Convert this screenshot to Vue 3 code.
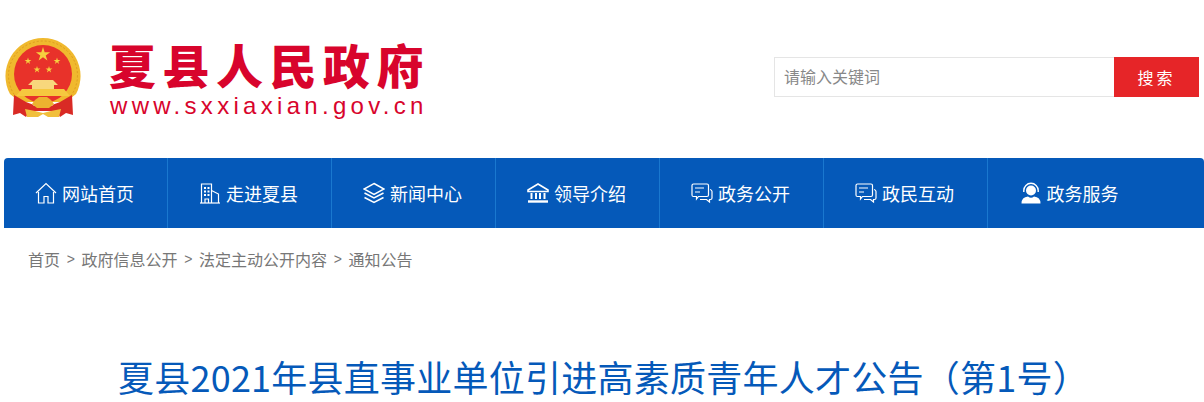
<template>
  <div class="page">
    <!-- Header -->
    <header class="site-header">
      <div class="logo">
        <svg class="emblem" width="84" height="90" viewBox="0 0 84 90">
          <!-- gold ring and red field -->
          <path d="M43 8 A38 38 0 0 1 76 64 L66 72 H20 L10 64 A38 38 0 0 1 43 8 Z" fill="#f0b92e" />
          <circle cx="43" cy="45.500" r="34.500" fill="none" stroke="#dd9c20" stroke-width="1" stroke-dasharray="2 2" />
          <circle cx="43" cy="44" r="29" fill="#e8322a" />
          <polygon v-for="(s, i) in stars" :key="i" :points="s" fill="#f6d03f" />
          <!-- gate -->
          <path d="M33 50 H53 L58 55 H54 V59 H32 V55 H28 Z" fill="#f8d77c" />
          <path d="M22 59 H64 L70 66 H16 Z" fill="#f6c83f" />
          <!-- ribbons -->
          <path d="M14 65 L26 72 L34 75 L30 80 L26 87 L20 83 L13 85 Z" fill="#d92a25" />
          <path d="M72 65 L60 72 L52 75 L56 80 L60 87 L66 83 L73 85 Z" fill="#d92a25" />
          <path d="M30 76 H56 L58 81 H28 Z" fill="#d92a25" />
          <!-- wheel and base -->
          <path d="M35 70 L39 67 H47 L51 70 L54 74 L49 78 H37 L32 74 Z" fill="#edb22f" />
          <path d="M25 79 L35 81 L43 83 L51 81 L61 79 L59 87 H48 L43 84 L38 87 H27 Z" fill="#f1bf3c" />
        </svg>
        <div class="logo-text">
          <div class="logo-name">夏县人民政府</div>
          <div class="logo-url">www.sxxiaxian.gov.cn</div>
        </div>
      </div>
      <div class="search">
        <input class="search-input" type="text" placeholder="请输入关键词" />
        <button class="search-btn">搜索</button>
      </div>
    </header>

    <!-- Nav -->
    <nav class="main-nav">
      <a v-for="item in navItems" :key="item.label" class="nav-item">
        <svg class="nav-icon" width="22" height="22" viewBox="0 0 22 22" fill="none" stroke="#fff" stroke-width="1.2">
          <template v-if="item.icon === 'home'">
            <path d="M1 11 L11 1.500 L21 11" />
            <path d="M3.500 10 V21 H9 V14.500 H13 V21 H18.500 V10" />
          </template>
          <template v-else-if="item.icon === 'building'">
            <path d="M1 21 H21" />
            <path d="M2.500 21 V2 H12.500 V21" />
            <path d="M12.500 8.500 L19.500 12 V21" />
            <path d="M5 6 H7 M8.500 6 H10.500 M5 9.500 H7 M8.500 9.500 H10.500 M5 13 H7 M8.500 13 H10.500" stroke-width="2" />
            <path d="M6 21 V17 H9.500 V21" />
          </template>
          <template v-else-if="item.icon === 'layers'">
            <path d="M11 1.500 L21 7 L11 12.500 L1 7 Z" stroke-width="1.500" />
            <path d="M1.500 11 L11 16 L20.500 11" stroke-width="1.500" />
            <path d="M1.500 15.500 L11 20.500 L20.500 15.500" stroke-width="1.500" />
          </template>
          <template v-else-if="item.icon === 'bank'">
            <path d="M11 2 L21 8 V9.500 H1 V8 Z" stroke-width="1.600" />
            <path d="M4.500 11 V17 M9 11 V17 M13 11 V17 M17.500 11 V17" stroke-width="2" />
            <path d="M1 19.500 H21" stroke-width="2.400" />
          </template>
          <template v-else-if="item.icon === 'chat'">
            <path d="M2.500 2 H16 Q17.500 2 17.500 3.500 V13 Q17.500 14.500 16 14.500 H7.500 L5.500 17 V14.500 H2.500 Q1 14.500 1 13 V3.500 Q1 2 2.500 2 Z" />
            <path d="M4 6 H13 M4 10 H9" />
            <path d="M19 7.500 Q21 8 21 9.500 V16 Q21 17.500 19.500 17.500 H18.500 V20 L15.500 17.500 H9" />
          </template>
          <template v-else>
            <circle cx="11" cy="8.500" r="5" fill="#fff" stroke="none" />
            <path d="M3.800 10 V8.500 A7.200 7.200 0 0 1 18.200 8.500 V10" stroke-width="1.400" />
            <path d="M1.500 21.500 Q1.500 15 8 14.500 Q11 17 14 14.500 Q20.500 15 20.500 21.500 Z" fill="#fff" stroke="none" />
          </template>
        </svg>
        <span>{{ item.label }}</span>
      </a>
    </nav>

    <!-- Breadcrumb -->
    <div class="crumbs">
      <template v-for="(c, i) in crumbs" :key="c">
        <span v-if="i > 0" class="crumb-sep">&gt;</span>
        <a class="crumb">{{ c }}</a>
      </template>
    </div>

    <h1 class="article-title">夏县2021年县直事业单位引进高素质青年人才公告（第1号）</h1>
  </div>
</template>

<script setup>
const navItems = [
  { label: '网站首页', icon: 'home' },
  { label: '走进夏县', icon: 'building' },
  { label: '新闻中心', icon: 'layers' },
  { label: '领导介绍', icon: 'bank' },
  { label: '政务公开', icon: 'chat' },
  { label: '政民互动', icon: 'chat' },
  { label: '政务服务', icon: 'user' }
]

const crumbs = ['首页', '政府信息公开', '法定主动公开内容', '通知公告']

// five pointed stars of the emblem
function star(cx, cy, r) {
  const pts = []
  for (let i = 0; i < 10; i++) {
    const rad = i % 2 ? r * 0.38 : r
    const a = (Math.PI / 5) * i - Math.PI / 2
    pts.push((cx + rad * Math.cos(a)).toFixed(2) + ',' + (cy + rad * Math.sin(a)).toFixed(2))
  }
  return pts.join(' ')
}

const stars = [
  star(43, 24.5, 7.5),
  star(28, 31, 3.6),
  star(57, 31, 3.6),
  star(37, 39.5, 3.6),
  star(49, 39.5, 3.6)
]
</script>

<style scoped>
.page {
  width: 1204px;
  height: 402px;
  overflow: hidden;
  background: #fff;
  font-family: "Noto Sans CJK SC", "Liberation Sans", sans-serif;
}

/* Header */
.site-header {
  height: 158px;
  display: flex;
  justify-content: space-between;
  box-sizing: border-box;
  padding-right: 5px;
}

.logo {
  display: flex;
  padding-top: 30px;
}

.emblem {
  flex-shrink: 0;
}

.logo-text {
  margin-left: 25px;
  padding-top: 6px;
}

.logo-name {
  font-size: 47px;
  line-height: 56px;
  font-weight: 900;
  letter-spacing: 6.500px;
  color: #d8042c;
  white-space: nowrap;
}

.logo-url {
  margin: 2px 0 0 1px;
  font-family: "Liberation Sans", sans-serif;
  font-size: 24px;
  line-height: 24px;
  letter-spacing: 4.300px;
  color: #d8042c;
  white-space: nowrap;
}

.search {
  display: flex;
  margin-top: 57px;
  height: 40px;
}

.search-input {
  width: 340px;
  height: 40px;
  box-sizing: border-box;
  border: 1px solid #e5e5e5;
  border-right: none;
  outline: none;
  padding: 0 9px 2px;
  font-family: inherit;
  font-size: 16px;
  color: #666;
}

.search-input::placeholder {
  color: #888;
  opacity: 1;
}

.search-btn {
  width: 85px;
  height: 40px;
  border: none;
  background: #e62528;
  color: #fff;
  font-family: inherit;
  font-size: 16px;
  letter-spacing: 3px;
  padding: 0;
}

/* Nav */
.main-nav {
  margin-left: 4px;
  width: 1200px;
  height: 70px;
  display: flex;
  background: #0559b9;
  border-radius: 4px 4px 0 0;
}

.nav-item {
  width: 164px;
  box-sizing: border-box;
  border-right: 1px solid #1a78cf;
  padding-right: 2px;
  display: flex;
  align-items: center;
  justify-content: center;
  gap: 5px;
  color: #fff;
  font-size: 18px;
}

.nav-item:last-child {
  border-right: none;
}

.nav-icon {
  flex-shrink: 0;
  margin-top: -1px;
}

.nav-item span {
  margin-top: -1px;
}

/* Breadcrumb */
.crumbs {
  height: 62px;
  padding-left: 28px;
  display: flex;
  align-items: center;
  font-size: 16px;
  color: #777;
}

.crumb-sep {
  width: 21.500px;
  text-align: center;
  font-size: 14px;
  font-family: "Liberation Sans", sans-serif;
}

/* Title */
.article-title {
  margin: 62px 0 0;
  font-size: 36px;
  line-height: 48px;
  font-weight: 400;
  letter-spacing: 0.250px;
  text-align: center;
  color: #0559b9;
  white-space: nowrap;
  padding-left: 3px;
}
</style>

<style>
html,
body {
  margin: 0;
  overflow: hidden;
}
</style>
